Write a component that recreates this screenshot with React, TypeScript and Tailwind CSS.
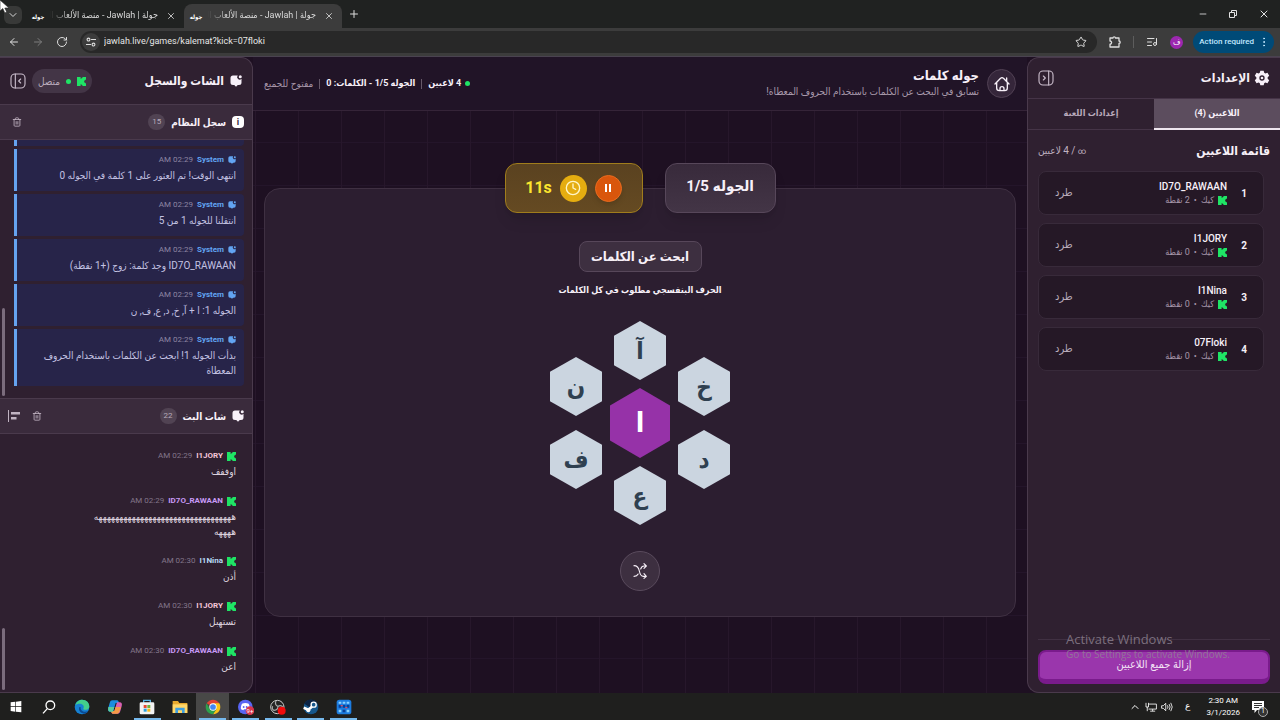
import type { ReactNode } from "react";
import { ArrowLeft, ArrowRight, ChevronDown, ChevronUp, Clock, ListMusic, Minus, MoreVertical, Plus, RotateCw, Star, Trash2, X } from "lucide-react";

const players = [
  { name: "ID7O_RAWAAN", points: "2 نقطة" },
  { name: "I1JORY", points: "0 نقطة" },
  { name: "I1Nina", points: "0 نقطة" },
  { name: "07Floki", points: "0 نقطة" },
];

const logs = [
  "انتهى الوقت! تم العثور على 1 كلمة في الجوله 0",
  "انتقلنا للجوله 1 من 5",
  "ID7O_RAWAAN وجد كلمة: زوج (+1 نقطة)",
  "الجوله 1: ا + آ, خ, د, ع, ف, ن",
  "بدأت الجوله 1! ابحث عن الكلمات باستخدام الحروف المعطاة",
];

const chat = [
  { name: "I1JORY", color: "text-[#f5c6d8]", time: "02:29 AM", lines: ["اوففف"] },
  { name: "ID7O_RAWAAN", color: "text-[#c79af5]", time: "02:29 AM", lines: ["هههههههههههههههههههههههههههههههههه", "ههههه"] },
  { name: "I1Nina", color: "text-[#b8d8f5]", time: "02:30 AM", lines: ["أذن"] },
  { name: "I1JORY", color: "text-[#f5c6d8]", time: "02:30 AM", lines: ["تستهبل"] },
  { name: "ID7O_RAWAAN", color: "text-[#c79af5]", time: "02:30 AM", lines: ["اعن"] },
];

const letters = [
  { char: "آ", place: "left-16 top-0" },
  { char: "خ", place: "left-32 top-9" },
  { char: "د", place: "left-32 top-[109px]" },
  { char: "ع", place: "left-16 top-[145px]" },
  { char: "ف", place: "left-0 top-[109px]" },
  { char: "ن", place: "left-0 top-9" },
];

function KickIcon() {
  return (
    <svg viewBox="0 0 10 10" className="size-[9px] shrink-0 fill-[#1fe465]" aria-hidden="true">
      <path d="M0 0h4v2h1V1h1V0h4v3H9v1H8v2h1v1h1v3H6V9H5V8H4v2H0z" />
    </svg>
  );
}

function BubbleIcon({ className }: { className: string }) {
  return (
    <svg viewBox="0 0 24 24" fill="currentColor" className={`shrink-0 ${className}`} aria-hidden="true">
      <path d="M6 1h9.500a4.800 4.800 0 0 0 7.500 6.500V15a5 5 0 0 1-5 5h-2.500L12 23.500 8.500 20H6a5 5 0 0 1-5-5V6a5 5 0 0 1 5-5z" />
      <circle cx="20.500" cy="3.500" r="3" />
    </svg>
  );
}

function PanelIcon({ flip = false }: { flip?: boolean }) {
  return (
    <svg viewBox="0 0 24 24" fill="none" stroke="currentColor" strokeWidth="1.700" strokeLinecap="round" strokeLinejoin="round" className={flip ? "size-4 -scale-x-100" : "size-4"} aria-hidden="true">
      <rect x="1.500" y="1.500" width="21" height="21" rx="6" />
      <path d="M16 1.500v21M8 9l3 3-3 3" />
    </svg>
  );
}

function GearIcon() {
  return (
    <svg viewBox="0 0 24 24" className="size-4" aria-hidden="true">
      <path fill="currentColor" fillRule="evenodd" d="M9.500 1h5l.8 3.200 1.700 1 3.200-1 2.600 4.300L20.500 11v2l2.300 2.500-2.600 4.300-3.200-1-1.700 1-.8 3.200h-5l-.8-3.200-1.700-1-3.200 1-2.600-4.300L3.500 13v-2L1.200 8.500l2.600-4.300 3.200 1 1.700-1zM12 8a4 4 0 1 0 0 8 4 4 0 0 0 0-8zm0 2a2 2 0 1 1 0 4 2 2 0 0 1 0-4z" />
    </svg>
  );
}

function HomeIcon() {
  return (
    <svg viewBox="0 0 24 24" fill="none" stroke="currentColor" strokeWidth="2" strokeLinecap="round" strokeLinejoin="round" className="size-4" aria-hidden="true">
      <path d="M1.500 12 9.800 3.500a3 3 0 0 1 4.400 0L22.500 12M4 10v8a4 4 0 0 0 4 4h8a4 4 0 0 0 4-4v-8M19 7V3M9 21.500V19a3 3 0 0 1 6 0v2.500" />
    </svg>
  );
}

function ShuffleIcon() {
  return (
    <svg viewBox="0 0 24 24" fill="none" stroke="currentColor" strokeWidth="1.700" strokeLinecap="round" strokeLinejoin="round" className="size-4" aria-hidden="true">
      <path d="M3 4c5 0 7 3 8 8s3 8 6 8h4M3 20c3 0 5-1 6.200-3.500M13 9c1-3 2.500-4.500 5-4.500h3M18 1l3.500 3.500L18 8M18 16l3.500 4-3.500 3" />
    </svg>
  );
}

function BrowserTab({ active = false }: { active?: boolean }) {
  return (
    <div className={`flex h-6 w-[158px] items-center gap-1 rounded-t-lg pr-2 pl-1 ${active ? "bg-[#3c3c3c]" : ""}`}>
      <span dir="rtl" className="w-4 shrink-0 text-center text-[6px] font-bold text-white">جوله</span>
      <span dir="rtl" className="min-w-0 flex-1 whitespace-nowrap text-[9px] text-[#d8d8d8] [mask-image:linear-gradient(to_right,transparent,black_20px)]">
        جولة | Jawlah - منصة الألعاب الت
      </span>
      <button aria-label="Close tab" className="ml-1 text-[#dcdcdc]">
        <X className="size-2.5" />
      </button>
    </div>
  );
}

function BrowserChrome() {
  return (
    <header className="shrink-0 bg-[#202221] font-['Roboto','DejaVu_Sans_Condensed','DejaVu_Sans',sans-serif]">
      <div className="flex h-7 items-end">
        <button aria-label="Search tabs" className="mr-1 mb-1 ml-1 flex size-[18px] items-center justify-center rounded-md bg-[#383938] text-[#d5d5d5]">
          <ChevronDown className="size-3" />
        </button>
        <BrowserTab />
        <BrowserTab active />
        <button aria-label="New tab" className="mb-2 ml-1.5 text-[#dcdcdc]">
          <Plus className="size-3" />
        </button>
        <div className="ml-auto flex h-full items-center gap-5 pr-2.5 text-[#e2e2e2]">
          <button aria-label="Minimize"><Minus className="size-2.5" /></button>
          <button aria-label="Restore">
            <svg viewBox="0 0 10 10" fill="none" stroke="currentColor" className="size-2.5">
              <path d="M1.500 3.500h5v5h-5zM3.500 3V1.500h5v5H7" />
            </svg>
          </button>
          <button aria-label="Close"><X className="size-3" /></button>
        </div>
      </div>
      <div className="flex h-[29px] items-center border-b border-[#4a4350] bg-[#3c3c3c] pr-1.5 pl-2 text-[#dedede]">
        <button aria-label="Back" className="mr-3"><ArrowLeft className="size-3" /></button>
        <button aria-label="Forward" className="mr-3 text-[#7d7d7d]"><ArrowRight className="size-3" /></button>
        <button aria-label="Reload" className="mr-3"><RotateCw className="size-3" /></button>
        <div className="flex h-[22px] flex-1 items-center rounded-full bg-[#282828] pr-2.5 pl-0.5">
          <button aria-label="Site information" className="mr-1 flex size-[18px] items-center justify-center rounded-full bg-[#3c3c3c]">
            <svg viewBox="0 0 12 12" fill="none" stroke="currentColor" strokeWidth="1.300" strokeLinecap="round" className="size-2.5">
              <circle cx="3" cy="3" r="1.700" /><circle cx="9" cy="9" r="1.700" /><path d="M6.500 3h5M.5 9h5" />
            </svg>
          </button>
          <input aria-label="Address" defaultValue="jawlah.live/games/kalemat?kick=07floki" className="min-w-0 flex-1 bg-transparent text-[9px] text-[#e6e6e6] outline-none" />
          <button aria-label="Bookmark"><Star className="size-3" /></button>
        </div>
        <div className="flex items-center pl-3">
          <button aria-label="Extensions">
            <svg viewBox="0 0 12 12" fill="none" stroke="currentColor" strokeWidth="1.300" strokeLinejoin="round" className="size-3">
              <path d="M1 2h3a1.200 1.200 0 0 1 2.400 0H10v3a1.200 1.200 0 0 1 0 2.400V11H1V8.200a1.600 1.600 0 0 0 0-3.200z" />
            </svg>
          </button>
          <span className="mx-3 h-3 w-px bg-[#5d5d5d]" />
          <button aria-label="Media"><ListMusic className="size-3" /></button>
          <button aria-label="Profile" className="mr-2.5 ml-3 flex size-[13px] items-center justify-center rounded-full bg-[#9c27b0] text-[8px] text-white">ف</button>
          <button className="flex h-[22px] items-center gap-1 rounded-full bg-[#004a77] pr-1 pl-1.5 text-[8px] font-medium text-[#c2e7ff]">
            Action required <MoreVertical className="size-3" />
          </button>
        </div>
      </div>
    </header>
  );
}

function SettingsPanel() {
  return (
    <aside className="relative flex w-[253px] shrink-0 flex-col rounded-l-xl border border-r-0 border-[#4a3a4c] bg-[#2f2030]">
      <div className="flex h-[41px] shrink-0 items-center justify-between border-b border-[#453447] px-2.5">
        <h2 className="flex items-center gap-1 text-xs font-bold">
          <GearIcon /> الإعدادات
        </h2>
        <button aria-label="طي الإعدادات" className="text-[#c9bccb]"><PanelIcon /></button>
      </div>
      <div className="flex h-[31px] shrink-0 text-[9px] font-bold">
        <button className="flex-1 border-b-2 border-[#eee6ef] bg-[#5c4d5e]">اللاعبين (4)</button>
        <button className="flex-1 border-b border-[#453447] text-[#b9aabb]">إعدادات اللعبة</button>
      </div>
      <div className="flex h-[41px] shrink-0 items-center justify-between px-2.5">
        <h3 className="text-xs font-bold">قائمة اللاعبين</h3>
        <span className="text-[10px] text-[#c0b3c2]"><span className="text-[8px]">∞</span> / 4 لاعبين</span>
      </div>
      <ol className="flex flex-1 flex-col gap-2 pr-4 pl-2.5">
        {players.map((player, i) => (
          <li key={player.name} className="flex h-11 items-center rounded-lg border border-[#382a3a] bg-[#251826] px-4">
            <span className="w-2 text-[10px] font-bold">{i + 1}</span>
            <div className="mr-3 flex flex-col">
              <span className="text-[10px] leading-[14px] font-medium">{player.name}</span>
              <span className="flex items-center gap-1 text-[9px] leading-3 text-[#a595a8]">
                <KickIcon /> كيك <span>•</span> {player.points}
              </span>
            </div>
            <button className="mr-auto text-[11px] text-[#b7aab9]">طرد</button>
          </li>
        ))}
      </ol>
      <div className="mx-2.5 mb-2 border-t border-[#403042] pt-2.5">
        <button className="h-[34px] w-full rounded-lg border-2 border-b-[5px] border-[#7a1b8c] bg-[#9a36ac] text-[11px] text-[#f3e3f5]">
          إزالة جميع اللاعبين
        </button>
      </div>
      <div dir="ltr" className="pointer-events-none absolute top-[572px] left-[38px] font-['Open_Sans',sans-serif] text-[#908593]/80">
        <p className="text-[13px] leading-[18px]">Activate Windows</p>
        <p className="text-[10px] leading-3">Go to Settings to activate Windows.</p>
      </div>
    </aside>
  );
}

function Game() {
  return (
    <main className="flex min-w-0 flex-1 flex-col bg-[#1e1022]">
      <div className="flex h-[54px] shrink-0 items-center border-b border-[#352438] bg-[#211427] px-[11px]">
        <button aria-label="الرئيسية" className="flex size-[29px] items-center justify-center rounded-full border border-[#514154] bg-[#35263a]">
          <HomeIcon />
        </button>
        <div className="mr-2">
          <h1 className="text-[13px] leading-4 font-bold">جوله كلمات</h1>
          <p className="text-[10px] leading-4 text-[#a899ab]">تسابق في البحث عن الكلمات باستخدام الحروف المعطاة!</p>
        </div>
        <div className="mr-auto flex items-center gap-1.5 text-[9px] whitespace-nowrap">
          <span className="flex items-center gap-1 font-bold"><i className="size-[5px] rounded-full bg-[#1fe465]" />4 لاعبين</span>
          <span className="h-2.5 w-px bg-[#665969]" />
          <span className="font-bold">الجوله 1/5 - الكلمات: 0</span>
          <span className="h-2.5 w-px bg-[#665969]" />
          <span className="text-[10px] text-[#a595a8]">مفتوح للجميع</span>
        </div>
      </div>
      <div className="flex-1 bg-[linear-gradient(to_right,#27172b_1px,transparent_1px),linear-gradient(to_bottom,#24152a_1px,transparent_1px)] bg-[size:43px_43px] bg-[position:2px_-12px] px-[11px] pt-[77px]">
        <section className="relative flex h-[429px] flex-col items-center rounded-2xl border border-[#3f3042] bg-[#2c1e30] pt-[52px]">
          <div className="absolute inset-x-0 -top-[26px] flex justify-center gap-[22px]">
            <div className="flex h-[50px] w-[111px] items-center justify-center rounded-xl border border-[#57475a] bg-linear-to-b from-[#382a3b] to-[#433546] pb-1 text-[15px] font-bold shadow-lg">الجوله 1/5</div>
            <div className="flex h-[50px] w-[138px] items-center justify-center gap-2 rounded-xl border border-[#a07d1c] bg-linear-to-b from-[#5a4220] to-[#654a22] shadow-lg">
              <button aria-label="إيقاف مؤقت" className="flex size-[27px] items-center justify-center gap-0.5 rounded-full border border-[#e96c20] bg-[#d9560c] shadow-md">
                <i className="h-2 w-0.5 bg-white" />
                <i className="h-2 w-0.5 bg-white" />
              </button>
              <span className="flex size-[27px] items-center justify-center rounded-full bg-[#e5ad10]">
                <Clock className="size-4 text-[#fff6c8]" />
              </span>
              <span className="text-base font-bold text-[#fbe52e]">11s</span>
            </div>
          </div>
          <h2 className="flex h-[31px] w-[123px] items-center justify-center rounded-lg border border-[#57475a] bg-[#3d2f40] text-[13px] font-bold whitespace-nowrap">ابحث عن الكلمات</h2>
          <p className="mt-2 text-[9px] leading-5 font-bold">الحرف البنفسجي مطلوب في كل الكلمات</p>
          {/* letter wheel */}
          <div dir="ltr" className="relative mt-[21px] h-[204px] w-[180px]">
            {letters.map(({ char, place }) => (
              <button key={char} className={`absolute flex h-[59px] w-[52px] items-center justify-center bg-[#cbd5e0] text-2xl font-bold text-[#2f4050] [clip-path:polygon(50%_0,100%_25%,100%_75%,50%_100%,0_75%,0_25%)] ${place}`}>
                {char}
              </button>
            ))}
            <button className="absolute top-[67px] left-[60px] flex h-[70px] w-[60px] items-center justify-center bg-[#9632a8] text-[28px] font-bold text-white [clip-path:polygon(50%_0,100%_25%,100%_75%,50%_100%,0_75%,0_25%)]">
              ا
            </button>
          </div>
          <button aria-label="خلط الحروف" className="mt-[26px] flex size-10 shrink-0 items-center justify-center rounded-full border border-[#5a4b5d] bg-[#3d2f40]">
            <ShuffleIcon />
          </button>
        </section>
      </div>
    </main>
  );
}

function SectionTitle({ icon, title, count, children }: { icon: ReactNode; title: string; count: number; children: ReactNode }) {
  return (
    <div className="flex h-9 shrink-0 items-center gap-1.5 border-y border-[#4a3a4c] bg-[#3a2b3c] px-2">
      {icon}
      <h3 className="text-[10px] font-bold">{title}</h3>
      <span className="flex h-4 min-w-4 items-center justify-center rounded-full bg-[#514353] px-1 text-[8px] text-[#b8abba]">{count}</span>
      <div className="mr-auto flex items-center gap-3 text-[#c0b3c2]">{children}</div>
    </div>
  );
}

function ChatPanel() {
  return (
    <aside className="flex w-[253px] shrink-0 flex-col overflow-hidden rounded-r-xl border border-l-0 border-[#4a3a4c] bg-[#2f2030]">
      <div className="flex h-[46px] shrink-0 items-center px-2.5">
        <h2 className="flex items-center gap-1.5 text-xs font-bold"><BubbleIcon className="size-3" /> الشات والسجل</h2>
        <div className="mr-auto flex h-6 items-center gap-1.5 rounded-full bg-[#433546] px-1.5 text-[10px] text-[#b9acbb]">
          <KickIcon /> <i className="size-[5px] rounded-full bg-[#1fe465]" /> متصل
        </div>
        <button aria-label="طي الشات" className="mr-1.5 text-[#c9bccb]"><PanelIcon flip /></button>
      </div>
      <SectionTitle
        icon={<span className="flex size-3 items-center justify-center rounded-sm bg-white text-[9px] leading-none font-bold text-[#3a2b3c]">i</span>}
        title="سجل النظام"
        count={15}
      >
        <button aria-label="مسح السجل" className="ml-1"><Trash2 className="size-2.5" /></button>
      </SectionTitle>
      <div className="relative flex h-[258px] shrink-0 flex-col justify-end gap-[3px] overflow-hidden pr-2 pb-3 pl-3.5">
        {/* tail of an older entry scrolled under the title */}
        <div className="h-10 shrink-0 rounded-r-sm border-l-[3px] border-[#65a3ef] bg-[#272449]" />
        {logs.map((text) => (
          <article key={text} className="shrink-0 rounded-r-sm border-l-[3px] border-[#65a3ef] bg-[#272449] pt-[5px] pr-2 pb-2 pl-3">
            <div className="flex h-3 items-center gap-1 text-[8px]">
              <BubbleIcon className="size-2 text-[#62a4f2]" />
              <span className="font-bold text-[#62a4f2]">System</span>
              <time className="text-[#8e86a3]">02:29 AM</time>
            </div>
            <p className="mt-0.5 text-[10px] leading-[15px] text-[#c3c2e2]">{text}</p>
          </article>
        ))}
        <i className="absolute bottom-0.5 left-0.5 h-[88px] w-[3px] rounded-full bg-[#7b6c7d]" />
      </div>
      <SectionTitle icon={<BubbleIcon className="size-3" />} title="شات البث" count={22}>
        <button aria-label="مسح الشات"><Trash2 className="size-2.5" /></button>
        <button aria-label="محاذاة">
          <svg viewBox="0 0 12 12" fill="currentColor" className="size-3"><path d="M0 0h1v12H0zM3 2h9v2.500H3zM3 7h5.500v2.500H3z" /></svg>
        </button>
      </SectionTitle>
      <div className="relative flex min-h-0 flex-1 flex-col justify-end gap-4 overflow-hidden px-4 pb-[18px]">
        {chat.map((message, i) => (
          <article key={i} className="shrink-0">
            <div className="flex h-3 items-center gap-1 text-[8px]">
              <KickIcon />
              <span className={`font-bold ${message.color}`}>{message.name}</span>
              <time className="text-[#83768a]">{message.time}</time>
            </div>
            <p className="mt-0.5 text-[10px] leading-[15px] whitespace-nowrap text-[#ddd2df]">
              {message.lines.map((line) => <span key={line} className="block">{line}</span>)}
            </p>
          </article>
        ))}
        <i className="absolute bottom-0.5 left-0.5 h-[62px] w-[3px] rounded-full bg-[#7b6c7d]" />
      </div>
    </aside>
  );
}

const apps = [
  {
    name: "Start",
    art: <path fill="#fff" d="m4 5 7-1v7H4zM12 4l8-1v8h-8zM4 12h7v7l-7-1zM12 12h8v8l-8-1z" />,
  },
  {
    name: "Search",
    art: <g fill="none" stroke="#fff" strokeWidth="2"><circle cx="14" cy="9.500" r="6.500" /><path d="m9.500 14.500-6.500 7" /></g>,
  },
  {
    name: "Edge",
    art: (
      <>
        <circle cx="12" cy="12" r="11" fill="#1681d2" />
        <path fill="#43cf8b" d="M2 9C4 3 8 1 12 1c7 0 11 5 11 10 0 4-3 6-7 5-3-.5-2-2-1.500-3 1-3-2-6-6-6-3 0-5 1-6.500 2z" />
        <path fill="#0b4a94" d="M8 12c-2 5 2 10 8 10 3-1 4-2 5-4-5 3-12 0-11-6z" />
      </>
    ),
  },
  {
    name: "Copilot",
    art: (
      <>
        <path fill="#1b8de0" d="M8 2h7c2 0 2.500 2 3 4h-5l-4 13H5c-3 0-4-2-3-6l2-7c.8-3 2-4 4-4z" />
        <path fill="#d85fb5" d="M15 5h4c3 0 4 2 3 6l-2 7c-.8 3-2 4-4 4H9c-2 0-2.500-2-3-4h5z" />
        <path fill="#f49a45" d="M6 18h5l2-6h8l-2 6c-1 3-2 4-4 4H9c-2 0-2.500-2-3-4z" />
        <path fill="#5acb9b" d="M2 12h9l-2 7H5c-3 0-4-2-3-7z" />
      </>
    ),
  },
  {
    name: "Store",
    open: true,
    art: (
      <>
        <path fill="none" stroke="#57b6e6" strokeWidth="2" d="M7 6V2h10v4" />
        <rect x="1" y="5" width="22" height="18" rx="2" fill="#f3f3f3" />
        <path fill="#e64a35" d="M7 9h4.500v4.500H7z" /><path fill="#70b33b" d="M12.500 9H17v4.500h-4.500z" />
        <path fill="#2aa0dc" d="M7 14.500h4.500V19H7z" /><path fill="#f6b91a" d="M12.500 14.500H17V19h-4.500z" />
      </>
    ),
  },
  {
    name: "Explorer",
    art: (
      <>
        <path fill="#e7a92e" d="M1 3h8l2 3h12v15H1z" /><path fill="#ffd76a" d="M1 8h22v13H1z" />
        <path fill="#3f9fe0" d="M5 13h14v8h-4v-4H9v4H5z" />
      </>
    ),
  },
  {
    name: "Chrome",
    open: true,
    active: true,
    art: (
      <>
        <path fill="#e34133" d="M12 12 2.500 6.500a11 11 0 0 1 19 0z" />
        <path fill="#fbc116" d="M12 12V6.500h9.500A11 11 0 0 1 12 23l5-8z" />
        <path fill="#2da14c" d="M12 12 7 15 2.500 6.500A11 11 0 0 0 12 23l5-8z" />
        <circle cx="12" cy="12" r="5.500" fill="#fff" /><circle cx="12" cy="12" r="4.300" fill="#4285f4" />
      </>
    ),
  },
  {
    name: "Discord",
    open: true,
    art: (
      <>
        <circle cx="11" cy="12" r="11" fill="#5865f2" />
        <path fill="#fff" d="M6 7c3-1.500 7-1.500 10 0 1.500 3 2 6 1.500 8.500L14 17l-1-1.500H9L8 17l-3.500-1.500C4 13 4.500 10 6 7z" />
        <circle cx="8.500" cy="12" r="1.400" fill="#5865f2" /><circle cx="13" cy="12" r="1.400" fill="#5865f2" />
        <circle cx="18" cy="17.500" r="6.500" fill="#d8364c" />
        <text x="18" y="21" textAnchor="middle" fontSize="9" fill="#fff">9+</text>
      </>
    ),
  },
  {
    name: "OBS",
    open: true,
    art: (
      <>
        <circle cx="11" cy="12" r="10" fill="#242424" stroke="#ccc" strokeWidth="1.500" />
        <path fill="none" stroke="#aaa" strokeWidth="1.800" d="M9 3c-2 4 0 7 3 8 3-2 6-1 8 2M12 11c0 4-2 6-6 6-3-1-3-4-2-6" />
        <circle cx="17.500" cy="17.500" r="6" fill="#f20c0c" />
      </>
    ),
  },
  {
    name: "Steam",
    open: true,
    art: (
      <>
        <circle cx="12" cy="12" r="11" fill="#16578d" />
        <path fill="#0c2344" d="M2 7a11 11 0 0 1 20 0L12 14z" />
        <path stroke="#fff" strokeWidth="4" d="m1 13 7 3 7-6" fill="none" />
        <circle cx="16" cy="8.500" r="3.800" fill="#16578d" stroke="#fff" strokeWidth="2" /><circle cx="8" cy="17" r="3" fill="#fff" />
      </>
    ),
  },
  {
    name: "Calculator",
    open: true,
    art: (
      <>
        <rect x="1" y="1" width="22" height="22" rx="4" fill="#1c7ce0" />
        <path fill="#8bd3ff" d="M4 4h4v3H4zM10 4h4v3h-4zM16 4h4v3h-4zM4 16h4v4H4zM16 16h4v4h-4z" />
        <path fill="#0b3f94" d="M4 9h4v4H4zM10 9h4v4h-4zM16 9h4v4h-4zM10 16h4v4h-4z" />
        <path fill="#e7485b" d="M7 9h3v2H7zM14 12h3v2h-3z" />
      </>
    ),
  },
];

function Taskbar() {
  return (
    <footer className="flex h-[27px] shrink-0 items-center bg-[#1f1f1e] font-['Roboto','DejaVu_Sans',sans-serif] text-white">
      <nav className="flex h-full w-[360px]">
        {apps.map((app) => (
          <button key={app.name} aria-label={app.name} className={`flex h-full flex-1 items-center justify-center ${app.active ? "bg-[#484847]" : ""}`}>
            <span className={`flex h-full w-[27px] items-center justify-center border-y-2 border-t-transparent ${app.open ? "border-b-[#76b9ed]" : "border-b-transparent"}`}>
              <svg viewBox="0 0 24 24" className="size-4">{app.art}</svg>
            </span>
          </button>
        ))}
      </nav>
      <div className="ml-auto flex h-full items-center pr-4">
        <button aria-label="Hidden icons"><ChevronUp className="size-3" /></button>
        <svg viewBox="0 0 14 12" fill="none" stroke="currentColor" className="ml-1 h-2.5 w-3"><path d="M4 2.500h9.500v6H4M1 1v5h3V1M2.500 6v5M6 11h6M9 8.500V11" /></svg>
        <svg viewBox="0 0 14 12" fill="none" stroke="currentColor" className="ml-1 h-2.5 w-3"><path d="M.5 4.500h2l3-3v9l-3-3h-2zM7.500 4q1.500 2 0 4M9.500 2.500q2.500 3.500 0 7M11.500 1q3.500 5 0 10" /></svg>
        <span className="ml-3 text-[9px]">ع</span>
        <div className="ml-4 text-center text-[8px] leading-3">
          <p>2:30 AM</p>
          <p>3/1/2026</p>
        </div>
        <button aria-label="Notifications" className="relative ml-3">
          <svg viewBox="0 0 12 12" className="size-3"><path fill="#fff" d="M0 0h12v9H5l-2.500 3V9H0z" /><path stroke="#333" d="M2 2.500h8M2 4.500h8M2 6.500h5" /></svg>
          <span className="absolute -right-1 -bottom-1 flex size-2.5 items-center justify-center rounded-full border border-[#aaa] bg-[#333] text-[7px]">1</span>
        </button>
      </div>
    </footer>
  );
}

export default function App() {
  return (
    <div className="relative flex h-screen flex-col overflow-hidden bg-[#1e1022]">
      <BrowserChrome />
      <div dir="rtl" className="flex min-h-0 flex-1 font-['Roboto','DejaVu_Sans_Condensed','DejaVu_Sans',sans-serif] text-[#f7f0f8]">
        <SettingsPanel />
        <Game />
        <ChatPanel />
      </div>
      <Taskbar />
      <svg viewBox="0 0 10 14" className="absolute top-0 left-0 h-3.5 w-2.5" aria-hidden="true">
        <path fill="#fff" stroke="#222" strokeWidth=".6" d="M0 0v11l2.800-2.500L4.800 13l2-1-2-4H9z" />
      </svg>
    </div>
  );
}
